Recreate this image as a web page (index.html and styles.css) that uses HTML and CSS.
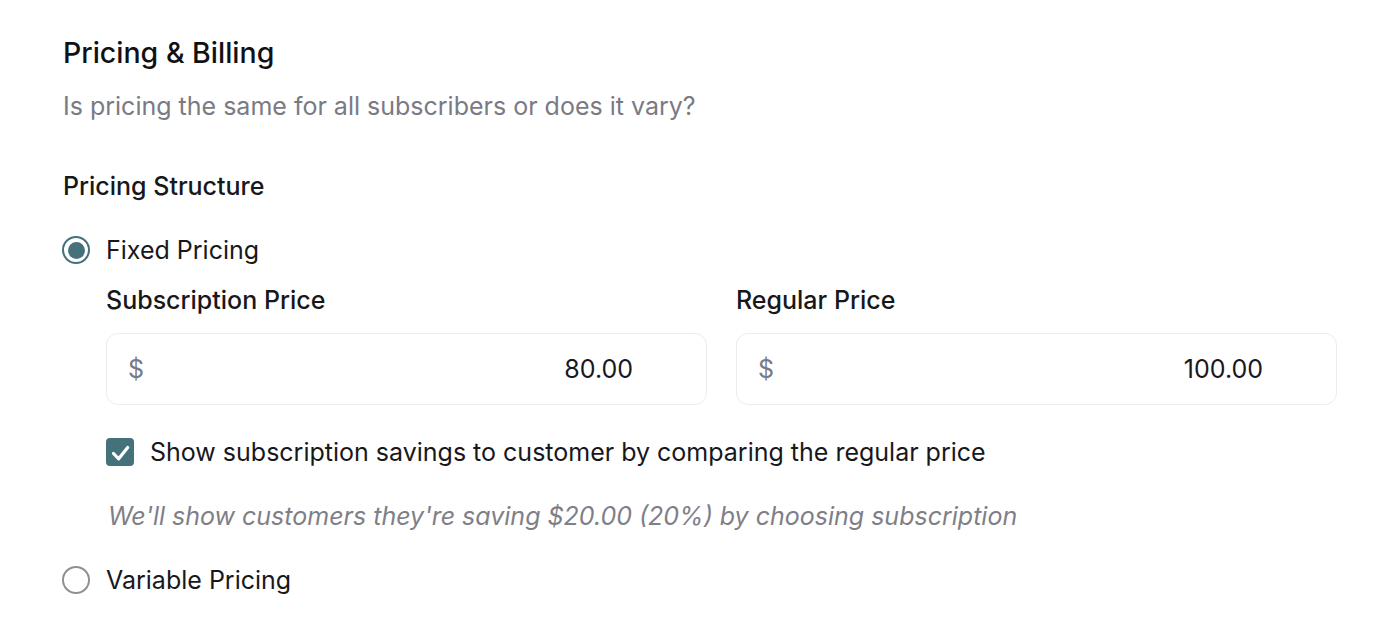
FILE: index.html
```html
<!DOCTYPE html>
<html lang="en">
<head>
<meta charset="utf-8">
<title>Pricing & Billing</title>
<link rel="stylesheet" href="styles.css">
</head>
<body>
<section class="section">
  <h2 class="title">Pricing &amp; Billing</h2>
  <p class="subtitle">Is pricing the same for all subscribers or does it vary?</p>

  <div class="group">
    <div class="group-label">Pricing Structure</div>

    <label class="radio-row">
      <span class="radio radio-checked"><span class="radio-dot"></span></span>
      <span class="radio-text">Fixed Pricing</span>
    </label>

    <div class="fixed-body">
      <div class="fields">
        <div class="field">
          <div class="field-label">Subscription Price</div>
          <div class="input">
            <span class="prefix">$</span>
            <span class="value">80.00</span>
          </div>
        </div>
        <div class="field">
          <div class="field-label">Regular Price</div>
          <div class="input">
            <span class="prefix">$</span>
            <span class="value">100.00</span>
          </div>
        </div>
      </div>

      <label class="check-row">
        <span class="checkbox">
          <svg viewBox="0 0 27 27" width="27" height="27"><path d="M6.5 14.5l5.2 5.3 9-11.3" fill="none" stroke="#fff" stroke-width="3.2" stroke-linecap="round" stroke-linejoin="round"/></svg>
        </span>
        <span class="check-text">Show subscription savings to customer by comparing the regular price</span>
      </label>

      <p class="help">We'll show customers they're saving $20.00 (20%) by choosing subscription</p>
    </div>

    <label class="radio-row">
      <span class="radio"></span>
      <span class="radio-text">Variable Pricing</span>
    </label>
  </div>
</section>
</body>
</html>
```

FILE: styles.css
```css
* { box-sizing: border-box; }
html, body { margin: 0; padding: 0; background: #ffffff; }
body {
  font-family: Inter, "Noto Sans", "Liberation Sans", sans-serif;
  color: #18181b;
}
.section {
  padding: 33px 49px 0 62px;
}
.title {
  margin: 0 0 0 1px;
  font-size: 28.5px;
  line-height: 39px;
  font-weight: 500;
  color: #111113;
}
.subtitle {
  margin: 17px 0 0 1px;
  font-size: 25px;
  line-height: 34px;
  color: #7a7a84;
}
.group { margin-top: 46px; display: flex; flex-direction: column; }
.group-label {
  margin-left: 1px;
  font-size: 25px;
  line-height: 34px;
  font-weight: 500;
  color: #18181b;
}
.radio-row {
  display: flex;
  align-items: center;
  gap: 16px;
  margin-top: 30px;
  height: 34px;
}
.radio {
  width: 28px;
  height: 28px;
  border-radius: 50%;
  border: 2px solid #8f8f94;
  display: flex;
  align-items: center;
  justify-content: center;
  flex: none;
}
.radio-checked { border: 2.7px solid #45717b; }
.radio-dot {
  width: 17px;
  height: 17px;
  border-radius: 50%;
  background: #45717b;
}
.radio-text {
  font-size: 25px;
  line-height: 34px;
  color: #18181b;
}
.fixed-body { margin-left: 44px; }
.fields {
  display: grid;
  grid-template-columns: 1fr 1fr;
  column-gap: 29px;
  margin-top: 16px;
}
.field-label {
  font-size: 25px;
  line-height: 34px;
  font-weight: 500;
  color: #18181b;
}
.input {
  margin-top: 16px;
  height: 72px;
  border: 1.5px solid #ececee;
  border-radius: 12px;
  display: flex;
  align-items: center;
  padding: 0 73px 0 21px;
  font-size: 25px;
}
.prefix { color: #7a7a84; }
.value { margin-left: auto; color: #18181b; }
.check-row {
  display: flex;
  align-items: center;
  gap: 16px;
  margin-top: 30px;
  height: 34px;
}
.checkbox {
  width: 28px;
  height: 28px;
  border-radius: 4px;
  background: #45717b;
  display: flex;
  align-items: center;
  justify-content: center;
  flex: none;
}
.check-text {
  font-size: 25px;
  line-height: 34px;
  color: #18181b;
}
.help {
  margin: 30px 0 0 2px;
  font-size: 25px;
  line-height: 34px;
  font-style: italic;
  color: #7f7f88;
}
```
